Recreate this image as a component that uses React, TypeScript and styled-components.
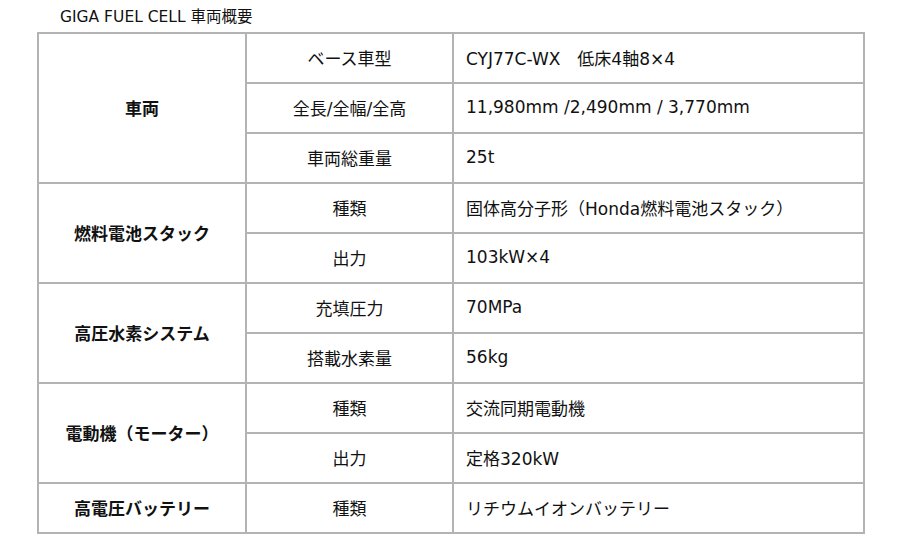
import React from "react";
import styled, { createGlobalStyle } from "styled-components";

const groups = [
  {
    name: "車両",
    rows: [
      ["ベース車型", "CYJ77C-WX　低床4軸8×4"],
      ["全長/全幅/全高", "11,980mm /2,490mm / 3,770mm"],
      ["車両総重量", "25t"],
    ],
  },
  {
    name: "燃料電池スタック",
    rows: [
      ["種類", "固体高分子形（Honda燃料電池スタック）"],
      ["出力", "103kW×4"],
    ],
  },
  {
    name: "高圧水素システム",
    rows: [
      ["充填圧力", "70MPa"],
      ["搭載水素量", "56kg"],
    ],
  },
  {
    name: "電動機（モーター）",
    rows: [
      ["種類", "交流同期電動機"],
      ["出力", "定格320kW"],
    ],
  },
  {
    name: "高電圧バッテリー",
    rows: [["種類", "リチウムイオンバッテリー"]],
  },
];

const App = () => {
  return (
    <Page>
      <GlobalStyle />
      <Title>GIGA FUEL CELL 車両概要</Title>
      <SpecTable>
        <colgroup>
          <col style={{ width: 208 }} />
          <col style={{ width: 207 }} />
          <col />
        </colgroup>
        <tbody>
          {groups.map((g) =>
            g.rows.map((r, i) => (
              <tr key={g.name + i}>
                {i === 0 && <GroupCell rowSpan={g.rows.length}>{g.name}</GroupCell>}
                <ItemCell>{r[0]}</ItemCell>
                <ValueCell>{r[1]}</ValueCell>
              </tr>
            ))
          )}
        </tbody>
      </SpecTable>
    </Page>
  );
};

const GlobalStyle = createGlobalStyle`
  body {
    margin: 0;
    background: #ffffff;
    color: #111111;
    font-family: "DejaVu Sans", "Noto Sans CJK JP", sans-serif;
  }
`;
const Page = styled.div`
  padding: 8px 0 0 37px;
`;
const Title = styled.h1`
  margin: 0 0 5px 23px;
  font-size: 15.5px;
  font-weight: normal;
  line-height: 19px;
`;
const SpecTable = styled.table`
  width: 828px;
  border-collapse: collapse;
  table-layout: fixed;
  font-size: 17px;
  td {
    border: 2px solid #b3b3b3;
    height: 46px;
    padding: 0 0 2px;
  }
`;
const GroupCell = styled.td`
  text-align: center;
  font-weight: bold;
`;
const ItemCell = styled.td`
  text-align: center;
`;
const ValueCell = styled.td`
  padding: 0 12px 2px !important;
`;

export default App;
